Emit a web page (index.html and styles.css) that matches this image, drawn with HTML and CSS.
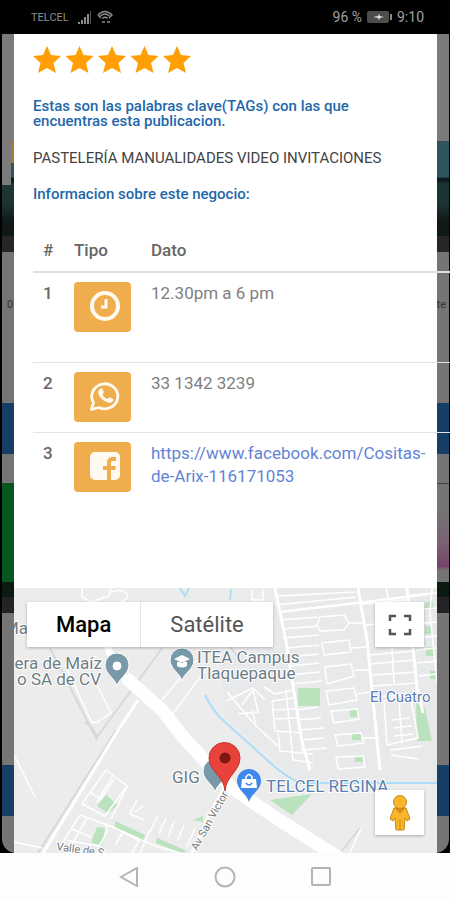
FILE: index.html
```
<!DOCTYPE html>
<html lang="es">
<head>
<meta charset="utf-8">
<meta name="viewport" content="width=device-width, initial-scale=1">
<title>Informacion del negocio</title>
<link rel="stylesheet" href="styles.css">
</head>
<body>
<header class="status">
  <div class="status-group">
    <span class="carrier">TELCEL</span>
    <svg width="14" height="13" viewBox="0 0 14 13" fill="#8d8d8d"><path d="M0 11h2v2H0zM3 9h2v4H3zM6 6h2v7H6zM9 3h2v10H9z"/><path d="M12 0h1v13h-1z" fill="#555"/></svg>
    <svg width="16" height="14" viewBox="0 0 16 14" fill="none" stroke="#8d8d8d" stroke-width="1.5"><path d="M1 5Q8-2 15 5L12 8M1 5l3 3M3.500 6Q8 2 12.500 6M5.500 8.500Q8 6 10.500 8.500"/><path d="M5 12h3m2 0h3"/></svg>
  </div>
  <div class="status-group">
    <span>96 %</span>
    <svg width="25" height="12" viewBox="0 0 25 12"><rect width="22" height="12" rx="2" fill="#4c4c4c"/><path d="M23 3h2v6h-2z" fill="#888"/><path d="M6 6l5-1 1-2 1 2 4 1-4 1-1 2-1-2z" fill="#ddd"/></svg>
    <span>9:10</span>
  </div>
</header>

<main class="screen">
  <div class="page" aria-hidden="true">
    <div class="band band-top"></div>
    <div class="band band-photo"></div>
    <div class="band band-dark"></div>
    <div class="band band-text"><span>0</span><span>te</span></div>
    <div class="band band-blue"></div>
    <div class="band band-gap"></div>
    <div class="band band-green"></div>
    <div class="band band-shadow"></div>
    <div class="band band-plain"></div>
    <div class="band band-blue"></div>
    <div class="band band-end"></div>
  </div>

  <section class="modal">
    <div class="content">
      <svg class="stars" width="158" height="28" viewBox="0 0 158 28" fill="#ff9f05" role="img" aria-label="5 estrellas">
        <defs><path id="star" d="M14 0l4 9 10 1-7.500 7L23 27l-9-5-9 5 2.500-10L0 10l10-1z"/></defs>
        <use href="#star"/><use href="#star" x="32.500"/><use href="#star" x="65"/><use href="#star" x="97.500"/><use href="#star" x="130"/>
      </svg>
      <h2 class="title">Estas son las palabras clave(TAGs) con las que encuentras esta publicacion.</h2>
      <p class="tags">PASTELERÍA MANUALIDADES VIDEO INVITACIONES</p>
      <h2 class="title">Informacion sobre este negocio:</h2>
      <table class="info">
        <thead><tr><th>#</th><th>Tipo</th><th>Dato</th></tr></thead>
        <tbody>
          <tr class="tall">
            <th>1</th>
            <td><button class="type" aria-label="Horario"><svg width="32" height="32" viewBox="0 0 32 32" fill="none" stroke="#fffaf0"><circle cx="16" cy="16" r="13" stroke-width="4"/><path d="M17 9v8h-5" stroke-width="3"/></svg></button></td>
            <td>12.30pm a 6 pm</td>
          </tr>
          <tr>
            <th>2</th>
            <td><button class="type" aria-label="WhatsApp"><svg width="32" height="32" viewBox="0 0 32 32"><path d="M2.500 29.500l2-7A13 12.500 0 1 1 10 27.500z" fill="none" stroke="#fffaf0" stroke-width="2.800" stroke-linejoin="round"/><path d="M11 9c1-1 2-1 2.500 0l1.200 3c.3 1-1.500 2-1.200 2.800 1 2 2.800 3.400 5 4.300.8.200 1.600-2 2.500-1.700l3 1.500c.7.500.3 2-.5 2.800-1.500 1.300-3.500 1.300-6 .3-4-1.700-6.500-4-8-8-.6-2-.2-3.600 1.500-5z" fill="#fffaf0"/></svg></button></td>
            <td>33 1342 3239</td>
          </tr>
          <tr>
            <th>3</th>
            <td><button class="type" aria-label="Facebook"><svg width="32" height="32" viewBox="0 0 32 32"><rect x="1" y="2" width="30" height="28" rx="5" fill="#fffaf0"/><path d="M18 30V20h-4v-4h4v-3c0-4 2-6 6-6h3v4h-3c-1.500 0-2 .8-2 2v3h5l-.7 4H22v10z" fill="#efad4d"/></svg></button></td>
            <td><a href="#">https://www.facebook.com/Cositas-de-Arix-116171053</a></td>
          </tr>
        </tbody>
      </table>
    </div>

    <div class="map">
      <svg class="map-art" viewBox="14 588 423 265" preserveAspectRatio="xMidYMid slice">
        <rect x="14" y="588" width="423" height="265" fill="#ececec"/>
        <path d="M14 650l36 0 47 90-55 113H14z" fill="#eeecea"/>
        <path d="M275 588h162v195H300l-75-65-5-60 55-10z" fill="#e8e9eb"/>
        <g fill="#b9e2bd">
          <path d="M298 688h22v18h-22zM350 710h8v7h-8zM352 733h9v7h-9zM355 755h8v7h-8zM425 602h8v8h-8zM425 626h7v8h-7zM426 647h8v9h-8zM430 671h7v8h-7zM416 703l9 5 7 33h-15z"/>
          <path d="M270 800l42-6-20 21zM97 806l9-11 12 10-10 8zM115 821l30 14-2 6-28-12zM157 838l30 13-6 2-25-10zM97 827l8 1-3 17-11-2zM193 820l10-4v6z"/>
        </g>
        <g fill="none" stroke="#d6d8da" stroke-width="2">
          <path d="M50 648l47 92M97 740q0-10-12-18M163 647l-66 90M116 730L38 853M225 640l12 16M340 853l20-25"/>
        </g>
        <g fill="none" stroke="#fff" stroke-linejoin="round">
          <path d="M105 640l12 32 13 10" stroke-width="7"/>
          <path d="M125 677l38 34 20 26 25 27 24 24 44 30 65 41" stroke-width="13"/>
          <path d="M138 700L117 732 43 853M224 788l-16 29-16 36" stroke-width="3"/>
          <path d="M275 588l12 59 5 33 10 62 8 28M358 588l9 52 10 100 3 30M407 588l10 99 6 26" stroke-width="3"/>
          <path d="M279 612l95-11 54-7" stroke-width="2.500"/>
          <g stroke-width="1.500">
            <path d="M82 588v9l9 5 18-6 2-8M110 593q10-5 16 0t-8 10M65 665l26 56q3 3 8 0l12-8-15-30M160 702l36-42M172 715l34-46M174 718l-14-14"/>
            <path d="M252 590v10h11v-11M278 596l77-4M276 605l80-8M280 620l38-3M282 629l36-3M283 638l36-3M286 648l33-3M288 657l31-3M289 666l30-3M290 675l30-3M292 684l30-3"/>
            <path d="M320 617l24-2 5 8-5 7-24 1-3-6zM322 643l27-3 2 12-27 3zM325 667l26-3 3 12-27 8zM326 691l28-3 3 12-28 5zM331 711l26-2 2 10-25 4zM335 735l26-2 3 10-26 3zM336 757l27-1 2 11-27 2zM349 623h15M351 648l15-1M354 670h15M357 694l13-2M361 738h15"/>
            <path d="M363 604l43-4M366 625l43-4M369 655l45-4M370 664l45-4M372 675l44-3M373 686l44-3M375 697l40-3M410 595l27-2M411 610l26-2M412 624l25-2M414 638l23-2M416 650l21-2M417 663l20-2M419 676l18-2M386 588l4 20 4 75M432 588l-2 25 7 70"/>
            <path d="M387 745l-3-44 26-7 8 44zM392 720l18-2M393 728l19-2M394 736l19-2M399 700l3 43M390 750l33-4M391 755l28 4"/>
            <path d="M293 690l-18 4-11-7M293 698l-21 3 3 30 28 2M272 710l23-1M273 719l24-1M296 710l22-3M297 720l24-2M298 730l26-2M300 740l24-2M301 750l26-2M278 733l2 18 33 3M286 690l7 70 20 3M265 700l-12-12-27 13M253 689l5 23-20 2M227 692l28 33 23 21M242 705l10-14M256 724l-4-14"/>
            <path d="M106 770l-24 34 23 12 22-30zM91 793l10 6 13-20M112 777l-15 25M80 815l35 13 40 18 32 9M80 815l-22 35M87 818l-18 32M72 829l19 8M66 840l33 6 8-14-1-9M128 785l-17 34M137 800l-7 14 14 6M145 805l-10 7M158 815l-8 17M166 818l-7 16M174 822l-6 15M184 825l-6 15M195 828l-8 19M115 845l8-13 16 9-7 12M140 853l10-23M14 842l28 6M14 755l21 42M350 853l11-25"/>
          </g>
        </g>
        <g fill="none" stroke="#addcf8" stroke-width="2">
          <path d="M205 695q9 18 20 27l50 45q12 10 25 16h137M180 588l5 8 4-8M231 589l-1 11"/>
        </g>
        <g class="poi">
          <text x="28" y="634" text-anchor="end">Ma</text>
          <text x="102" y="669" text-anchor="end">era de Maíz</text>
          <text x="101" y="685" text-anchor="end">o SA de CV</text>
          <text x="197" y="663">ITEA Campus</text>
          <text x="197" y="679">Tlaquepaque</text>
          <text x="172" y="783">GIG</text>
          <text x="266" y="792" class="shop">TELCEL REGINA</text>
          <text x="370" y="702" class="area">El Cuatro</text>
          <text class="street" transform="translate(197 851) rotate(-61)">Av San Victor</text>
          <text class="street" transform="translate(56 850) rotate(8)">Valle de S</text>
        </g>
        <g fill="#7799a8" stroke="#fff">
          <path id="pin" d="M117 686c-2-8-12-12-12-21a12 12 0 0 1 24 0c0 9-10 13-12 21z"/>
          <use href="#pin" x="65" y="-5"/><use href="#pin" x="98" y="106"/>
          <circle cx="117" cy="666" r="4" fill="#fff"/>
          <path d="M174 659l8-4 8 4-8 4zM177 662v4q5 3 10 0v-4" fill="#fff" stroke="none"/>
        </g>
        <path d="M249 802c-2-8-12-12-12-21a12 12 0 0 1 24 0c0 9-10 13-12 21z" fill="#3f87ea"/>
        <path d="M242 779h14l1 9h-16z" fill="#fff"/><path d="M246 780v-3q3-5 6 0v3" fill="none" stroke="#fff" stroke-width="1.500"/><path d="M246 783q3 4 6 0" fill="none" stroke="#3f87ea" stroke-width="1.500"/>
        <path d="M225 791c-1-15-16-20-16-33a15.500 15.500 0 0 1 31 0c0 13-14 18-15 33z" fill="#e8433a" stroke="#c93229"/>
        <circle cx="225" cy="758" r="5.500" fill="#7c1712"/>
      </svg>
      <div class="map-types"><button class="active">Mapa</button><button>Satélite</button></div>
      <button class="tool full" aria-label="Pantalla completa"><svg width="24" height="22" viewBox="0 0 24 22" fill="none" stroke="#555" stroke-width="2.500"><path d="M2 7V2h6M16 2h6v5M22 15v5h-6M8 20H2v-5"/></svg></button>
      <button class="tool pegman" aria-label="Street View"><svg width="22" height="36" viewBox="0 0 22 36" fill="#f9b62b" stroke="#c98716" stroke-width="1"><path d="M5 13h12l4 11-3 2-2-3-1 12H7L6 23l-2 3-3-2z"/><path d="M11 25v10" /><path d="M6 13h10l-5 5z" fill="#e58a16"/><circle cx="11" cy="7" r="6.500"/></svg></button>
    </div>
  </section>
</main>

<nav class="navbar">
  <button aria-label="Atrás"><svg width="20" height="20" viewBox="0 0 20 20"><path d="M18 1v18L2 10z"/></svg></button>
  <button aria-label="Inicio"><svg width="22" height="22" viewBox="0 0 22 22"><circle cx="11" cy="11" r="9.500"/></svg></button>
  <button aria-label="Recientes"><svg width="20" height="20" viewBox="0 0 20 20"><rect x="1" y="1" width="18" height="17" rx="1"/></svg></button>
</nav>
</body>
</html>
```
FILE: styles.css
```
* { box-sizing: border-box; }
body {
  margin: 0;
  min-height: 100vh;
  display: flex;
  flex-direction: column;
  overflow-x: hidden;
  background: #000;
  color: #808080;
  font-family: Roboto, "Liberation Sans", sans-serif;
}
button { border: 0; padding: 0; font: inherit; }
svg { display: block; }

.status {
  height: 34px;
  padding: 0 26px 0 31px;
  display: flex;
  align-items: center;
  justify-content: space-between;
  background: #000;
  color: #a0a0a0;
  font-size: 14px;
}
.status-group { display: flex; align-items: center; gap: 5px; }
.carrier { font-size: 11px; color: #8d8d8d; margin-right: 4px; }

.screen {
  flex: 1;
  position: relative;
  display: flex;
  padding: 0 13px 0 14px;
}
.page {
  position: absolute;
  inset: 0 1px 0 2px;
  display: flex;
  flex-direction: column;
  overflow: hidden;
  background: #757575;
  border-radius: 0 0 14px 14px;
}
.band-top { height: 107px; background: #7b7b7b; }
.band-photo {
  height: 95px;
  background:
    linear-gradient(#7b7b7b, #7b7b7b) 0 0 / 9px 44px no-repeat,
    linear-gradient(#a37a35, #a37a35) 9px 0 / 4px 22px no-repeat,
    linear-gradient(#2f565e 0 38%, #0b1c1e 39% 42%, #1c3534 45% 65%, #101818 85%);
}
.band-dark { height: 16px; background: #262626; }
.band-text {
  height: 151px;
  display: flex;
  justify-content: space-between;
  padding: 46px 3px 0 5px;
  color: #333;
  font-size: 11px;
}
.band-blue { height: 51px; background: #173f66; }
.band-gap { height: 29px; }
.band-green {
  height: 99px;
  background:
    linear-gradient(#06571f, #06571f) 0 0 / 50% 100% no-repeat,
    linear-gradient(#444 1px, #757575 1px 25%, #7a6374 60%, #784068 84%, #757575 88%);
}
.band-shadow { height: 31px; background: linear-gradient(#0b1b12 50%, #242424 50%); }
.band-plain { height: 152px; }

.modal {
  position: relative;
  flex: 1;
  min-width: 0;
  display: flex;
  flex-direction: column;
  background: #fff;
}
.content { padding: 12px 19px 0; height: 554px; }
.stars { margin-bottom: 25px; }
.title {
  margin: 0;
  color: #1f68aa;
  font-size: 15px;
  line-height: 15px;
  font-weight: 500;
}
.tags { margin: 20px 0; color: #444; font-size: 15px; line-height: 18px; }

.info {
  width: calc(100% + 32px);
  margin-top: 28px;
  border-collapse: collapse;
  font-size: 17px;
  line-height: 23px;
}
.info th, .info td {
  padding: 9px 10px 10px;
  border-top: 1px solid #e2e2e2;
  text-align: left;
  vertical-align: top;
  overflow-wrap: anywhere;
}
.info th { color: #666; font-weight: 500; font-size: 17px; }
.info th:first-child { width: 31px; }
.info td:nth-child(2) { width: 76px; }
.info td:last-child { padding-right: 10px; }
.info thead th { border-top: 0; border-bottom: 2px solid #e0e0e0; }
.info thead th { line-height: 22px; }
.tall { height: 90px; }
.info a { color: #6283d6; text-decoration: none; }
.type {
  width: 57px;
  height: 50px;
  padding: 0 0 2px 15px;
  display: block;
  border-radius: 4px;
  background: #efad4d;
}

.map { position: relative; flex: 1; min-height: 265px; overflow: hidden; }
.map-art { position: absolute; width: 100%; height: 100%; }
.poi { font-size: 17px; fill: #6d7d86; stroke: #fff; stroke-width: 2px; paint-order: stroke; }
.poi .shop { fill: #587fb0; }
.poi .area { fill: #5c79b0; font-size: 15px; }
.poi .street { fill: #777; font-size: 11px; }
.map-types, .tool { position: absolute; background: #fff; box-shadow: 0 1px 3px #0004; }
.map-types { top: 14px; left: 13px; height: 45px; display: flex; }
.map-types button { padding: 0 29px; background: transparent; font-size: 22px; color: #555; }
.map-types .active { color: #000; font-weight: 500; border-right: 1px solid #e5e5e5; }
.tool { right: 13px; width: 49px; height: 45px; display: grid; place-items: center; }
.full { top: 14px; }
.pegman { bottom: 18px; }

.navbar {
  height: 47px;
  display: flex;
  justify-content: center;
  align-items: center;
  gap: 75px;
  background: #fdfdfd;
}
.navbar button { background: transparent; }
.navbar svg { fill: none; stroke: #b4b4b4; stroke-width: 2; }
```
